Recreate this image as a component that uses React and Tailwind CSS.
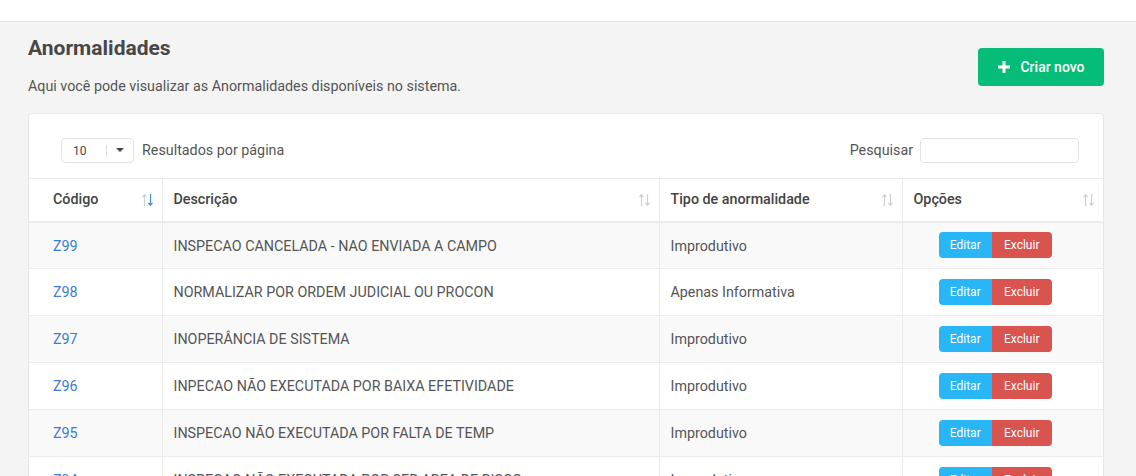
import React from "react";

const rows = [
  ["Z99", "INSPECAO CANCELADA - NAO ENVIADA A CAMPO", "Improdutivo"],
  ["Z98", "NORMALIZAR POR ORDEM JUDICIAL OU PROCON", "Apenas Informativa"],
  ["Z97", "INOPERÂNCIA DE SISTEMA", "Improdutivo"],
  ["Z96", "INPECAO NÃO EXECUTADA POR BAIXA EFETIVIDADE", "Improdutivo"],
  ["Z95", "INSPECAO NÃO EXECUTADA POR FALTA DE TEMP", "Improdutivo"],
  ["Z94", "INSPECAO NÃO EXECUTADA POR SER AREA DE RISCO", "Improdutivo"],
  ["Z93", "INSPECAO NÃO EXECUTADA", "Improdutivo"],
];

function Sort({ active }) {
  return (
    <span className="absolute right-[9px] top-1/2 -translate-y-1/2 flex gap-[1px]">
      <svg width="5" height="12" viewBox="0 0 5 12">
        <path d="M2.5 1v11M0.5 3L2.5 0.8L4.5 3" stroke="#cfcfcf" strokeWidth="1.2" fill="none" />
      </svg>
      <svg width="5" height="12" viewBox="0 0 5 12">
        <path d="M2.5 0v11M0.5 9L2.5 11.2L4.5 9" stroke={active ? "#3a8fd9" : "#cfcfcf"} strokeWidth="1.2" fill="none" />
      </svg>
    </span>
  );
}

export default function App() {
  return (
    <div
      className="min-h-[476px] bg-[#f4f4f4] text-[#555]"
      style={{ fontFamily: "Roboto, 'Liberation Sans', sans-serif" }}
    >
      <div className="h-[22px] bg-white border-b border-[#e5e5e5]" />
      <div className="pl-[28px] pr-[32px] pt-[12px]">
        <div className="flex justify-between items-start">
          <div>
            <h1 className="text-[21px] leading-[28px] font-bold text-[#474747]">Anormalidades</h1>
            <p className="mt-[14px] text-[14.3px] leading-[20px] text-[#555]">
              Aqui você pode visualizar as Anormalidades disponíveis no sistema.
            </p>
          </div>
          <button className="mt-[14px] h-[38px] w-[126px] rounded-[4px] bg-[#05bd78] text-white text-[14px] font-medium flex items-center justify-center gap-[9px]">
            <svg width="14" height="14" viewBox="0 0 14 14">
              <path d="M7 1v12M1 7h12" stroke="white" strokeWidth="3" />
            </svg>
            <span>Criar novo</span>
          </button>
        </div>

        <div className="mt-[17px] bg-white border border-[#e6e6e6] rounded-[4px] overflow-hidden">
          <div className="flex items-center justify-between pl-[32px] pr-[24px] pt-[24px] pb-[15px]">
            <div className="flex items-center">
              <div className="w-[73px] h-[25px] border border-[#e3e3e3] rounded-[4px] flex items-center pl-[11px] text-[12px] text-[#444]">
                <span className="w-[33px]">10</span>
                <span className="w-px h-[12px] bg-[#ddd]" />
                <svg className="ml-[9px]" width="8" height="5" viewBox="0 0 8 5">
                  <path d="M0 0h8L4 4z" fill="#444" />
                </svg>
              </div>
              <span className="ml-[8px] text-[14.3px] text-[#555]">Resultados por página</span>
            </div>
            <div className="flex items-center">
              <span className="text-[14.3px] text-[#555] mr-[7px]">Pesquisar</span>
              <input className="w-[159px] h-[25px] border border-[#e3e3e3] rounded-[4px] outline-none" />
            </div>
          </div>

          <table className="w-full border-collapse text-[14.3px] text-left">
            <thead>
              <tr className="border-t border-[#ebebeb] border-b-2">
                <th className="relative w-[133px] h-[43px] pl-[24px] pr-[12px] font-medium text-[#444] border-r border-[#ebebeb]">
                  Código<Sort active />
                </th>
                <th className="relative w-[497px] h-[43px] pl-[11px] pr-[12px] font-medium text-[#444] border-r border-[#ebebeb]">
                  Descrição<Sort />
                </th>
                <th className="relative w-[243px] h-[43px] pl-[11px] pr-[12px] font-medium text-[#444] border-r border-[#ebebeb]">
                  Tipo de anormalidade<Sort />
                </th>
                <th className="relative h-[43px] pl-[11px] pr-[12px] font-medium text-[#444]">
                  Opções<Sort />
                </th>
              </tr>
            </thead>
            <tbody>
              {rows.map((r, i) => (
                <tr key={r[0]} className={(i % 2 === 0 ? "bg-[#f9f9f9] " : "bg-white ") + "border-b border-[#ebebeb]"}>
                  <td className="h-[47px] pl-[24px] pr-[12px] pt-[2px] text-[#3d7bd4] border-r border-[#ebebeb]">{r[0]}</td>
                  <td className="h-[47px] pl-[11px] pr-[12px] pt-[2px] text-[#555] border-r border-[#ebebeb]">{r[1]}</td>
                  <td className="h-[47px] pl-[11px] pr-[12px] pt-[2px] text-[#555] border-r border-[#ebebeb]">{r[2]}</td>
                  <td className="h-[47px] pl-[11px] pr-[26px]">
                    <div className="flex justify-center">
                      <button className="h-[26px] w-[53px] bg-[#29b6f6] text-white text-[12px] rounded-l-[4px]">Editar</button>
                      <button className="h-[26px] w-[60px] bg-[#d9534f] text-white text-[12px] rounded-r-[4px]">Excluir</button>
                    </div>
                  </td>
                </tr>
              ))}
            </tbody>
          </table>
        </div>
      </div>
    </div>
  );
}
